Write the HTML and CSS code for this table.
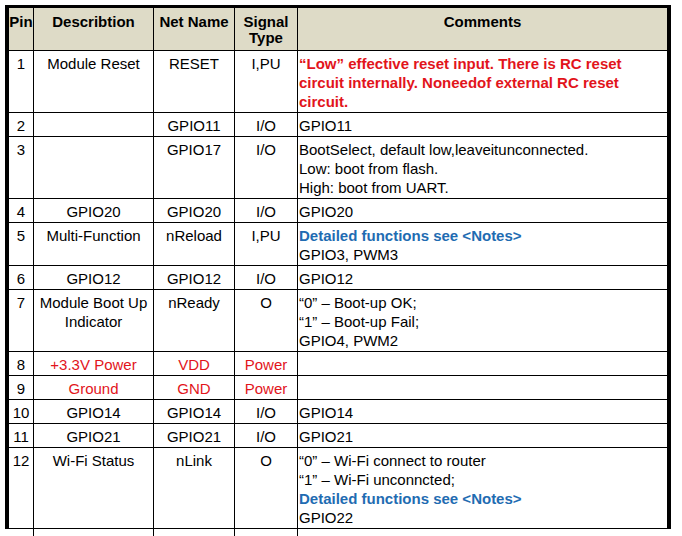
FILE: index.html
```html
<!DOCTYPE html>
<html>
<head>
<meta charset="utf-8">
<link rel="stylesheet" href="styles.css">
</head>
<body>
<table class="pins">
  <thead>
    <tr>
      <th class="c-pin">Pin</th>
      <th class="c-desc">Describtion</th>
      <th class="c-net">Net Name</th>
      <th class="c-sig">Signal<br>Type</th>
      <th class="c-com">Comments</th>
    </tr>
  </thead>
  <tbody>
    <tr>
      <td>1</td><td>Module Reset</td><td>RESET</td><td>I,PU</td>
      <td class="red b">“Low” effective reset input. There is RC reset<br>circuit internally. Noneedof external RC reset<br>circuit.</td>
    </tr>
    <tr>
      <td>2</td><td></td><td>GPIO11</td><td>I/O</td><td>GPIO11</td>
    </tr>
    <tr>
      <td>3</td><td></td><td>GPIO17</td><td>I/O</td>
      <td>BootSelect, default low,leaveitunconnected.<br>Low: boot from flash.<br>High: boot from UART.</td>
    </tr>
    <tr>
      <td>4</td><td>GPIO20</td><td>GPIO20</td><td>I/O</td><td>GPIO20</td>
    </tr>
    <tr>
      <td>5</td><td>Multi-Function</td><td>nReload</td><td>I,PU</td>
      <td><span class="blue b">Detailed functions see &lt;Notes&gt;</span><br>GPIO3, PWM3</td>
    </tr>
    <tr>
      <td>6</td><td>GPIO12</td><td>GPIO12</td><td>I/O</td><td>GPIO12</td>
    </tr>
    <tr>
      <td>7</td><td>Module Boot Up<br>Indicator</td><td>nReady</td><td>O</td>
      <td>“0” – Boot-up OK;<br>“1” – Boot-up Fail;<br>GPIO4, PWM2</td>
    </tr>
    <tr>
      <td>8</td><td class="red">+3.3V Power</td><td class="red">VDD</td><td class="red">Power</td><td></td>
    </tr>
    <tr>
      <td>9</td><td class="red">Ground</td><td class="red">GND</td><td class="red">Power</td><td></td>
    </tr>
    <tr>
      <td>10</td><td>GPIO14</td><td>GPIO14</td><td>I/O</td><td>GPIO14</td>
    </tr>
    <tr>
      <td>11</td><td>GPIO21</td><td>GPIO21</td><td>I/O</td><td>GPIO21</td>
    </tr>
    <tr>
      <td>12</td><td>Wi-Fi Status</td><td>nLink</td><td>O</td>
      <td>“0” – Wi-Fi connect to router<br>“1” – Wi-Fi unconncted;<br><span class="blue b">Detailed functions see &lt;Notes&gt;</span><br>GPIO22</td>
    </tr>
    <tr class="tail">
      <td></td><td></td><td></td><td></td><td></td>
    </tr>
  </tbody>
</table>
</body>
</html>
```
FILE: styles.css
```css
html, body {
  margin: 0;
  background: #fff;
}
body {
  padding: 5px 0 0 5px;
}
.pins {
  border-collapse: separate;
  border-spacing: 0;
  table-layout: fixed;
  width: 666px;
  font-family: "Liberation Sans", Arial, sans-serif;
  font-size: 15px;
  color: #000;
}
.pins th,
.pins td {
  box-sizing: border-box;
  border-right: 1px solid #000;
  border-bottom: 1px solid #000;
  padding: 3px 0 1px;
  line-height: 19px;
  text-align: center;
  vertical-align: top;
  white-space: nowrap;
  overflow: hidden;
}
.pins th {
  background: #dedbc7;
  font-weight: bold;
  line-height: 16px;
  padding: 6px 0 4px;
  border-top: 3px solid #000;
}
.pins tr > :first-child {
  border-left: 4px solid #000;
}
.pins tr > :last-child {
  border-right: 4px solid #000;
  text-align: left;
  padding-left: 1px;
}
.pins th:last-child {
  text-align: center;
  padding-left: 0;
}
.c-pin { width: 29px; }
.c-desc { width: 120px; }
.c-net { width: 81px; }
.c-sig { width: 63px; }
.c-com { width: 373px; }

.pins .tail td {
  border-bottom: 0;
  height: 12px;
  padding: 0;
}
.pins .tail td:first-child {
  border-left: 0;
}
.pins .tail td:last-child {
  border-right: 0;
}

.red { color: #e2141b; }
.blue { color: #1f6cb2; }
.b { font-weight: bold; }
```
